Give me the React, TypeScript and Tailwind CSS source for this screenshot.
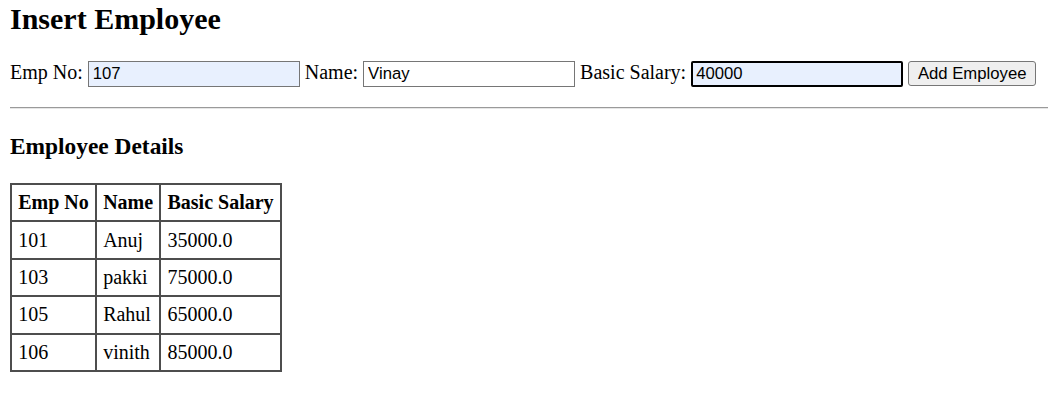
import React from "react";

const rows = [
  ["101", "Anuj", "35000.0"],
  ["103", "pakki", "75000.0"],
  ["105", "Rahul", "65000.0"],
  ["106", "vinith", "85000.0"],
];

export default function App() {
  return (
    <div className="min-h-[401px] bg-white pl-[10px] pt-[2px] text-black [font-family:'Liberation_Serif','Times_New_Roman',serif]">
      <h1 className="m-0 text-[30px] font-bold leading-[34px]">Insert Employee</h1>

      <div className="mt-[25px] flex items-baseline text-[20px] leading-[23px]">
        <span>Emp No:</span>
        <input
          readOnly
          value="107"
          className="ml-[5px] box-border h-[26px] w-[212px] border border-[#767676] bg-[#e8f0fe] px-[4px] text-[16.7px] outline-none [font-family:'Liberation_Sans',Arial,sans-serif]"
        />
        <span className="ml-[5px]">Name:</span>
        <input
          readOnly
          value="Vinay"
          className="ml-[5px] box-border h-[26px] w-[212px] border border-[#767676] bg-white px-[4px] text-[16.7px] outline-none [font-family:'Liberation_Sans',Arial,sans-serif]"
        />
        <span className="ml-[5px]">Basic Salary:</span>
        <input
          readOnly
          value="40000"
          className="ml-[5px] box-border h-[26px] w-[212px] rounded-[2px] border-2 border-black bg-[#e8f0fe] px-[3px] text-[16.7px] outline-none [font-family:'Liberation_Sans',Arial,sans-serif]"
        />
        <button className="ml-[5px] box-border h-[25px] w-[128px] rounded-[3px] border border-[#767676] bg-[#efefef] px-[7px] text-[16.7px] leading-[19px] [font-family:'Liberation_Sans',Arial,sans-serif]">
          Add Employee
        </button>
      </div>

      <div className="mt-[20px] border-t border-b border-t-[#9a9a9a] border-b-[#e6e6e6]" />

      <h3 className="m-0 mt-[24px] text-[23.4px] font-bold leading-[27px]">Employee Details</h3>

      <table className="mt-[23px] border-collapse border-2 border-[#4d4d4d] text-[20px] leading-[23px]">
        <thead>
          <tr>
            <th className="border-2 border-[#4d4d4d] px-[6.2px] py-[6.2px] text-left font-bold">Emp No</th>
            <th className="border-2 border-[#4d4d4d] px-[6.2px] py-[6.2px] text-left font-bold">Name</th>
            <th className="border-2 border-[#4d4d4d] px-[6.2px] py-[6.2px] text-left font-bold">Basic Salary</th>
          </tr>
        </thead>
        <tbody>
          {rows.map((r) => (
            <tr key={r[0]}>
              <td className="border-2 border-[#4d4d4d] px-[6.2px] py-[6.2px]">{r[0]}</td>
              <td className="border-2 border-[#4d4d4d] px-[6.2px] py-[6.2px]">{r[1]}</td>
              <td className="border-2 border-[#4d4d4d] px-[6.2px] py-[6.2px]">{r[2]}</td>
            </tr>
          ))}
        </tbody>
      </table>
    </div>
  );
}
